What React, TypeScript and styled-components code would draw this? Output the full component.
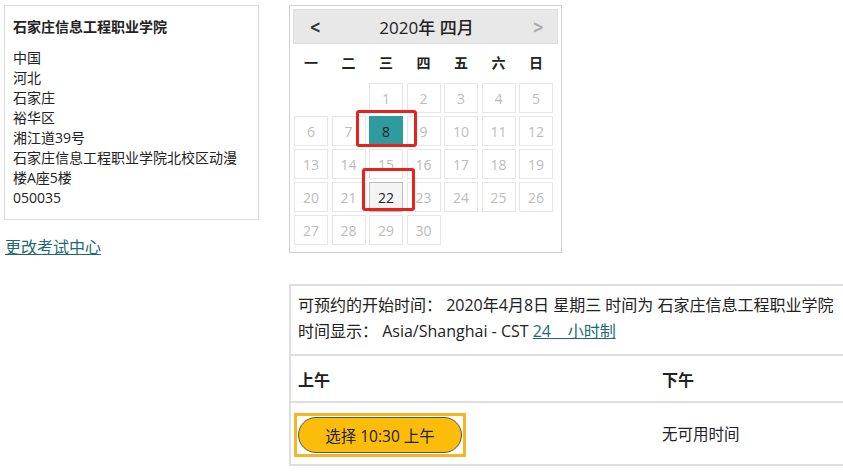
import React from 'react';
import styled, {createGlobalStyle} from 'styled-components';

const GlobalStyle = createGlobalStyle`
    body {
        margin: 0;
        width: 843px;
        height: 474px;
        overflow: hidden;
        background: #fff;
        color: #222;
        font-family: "Open Sans", "Noto Sans CJK SC", sans-serif;
    }
`;

const WEEKDAYS = ['一', '二', '三', '四', '五', '六', '日'];
const ADDRESS = ['中国', '河北', '石家庄', '裕华区', '湘江道39号', '石家庄信息工程职业学院北校区动漫', '楼A座5楼', '050035'];
const SELECTED_DAY = 8;
const FOCUSED_DAY = 22;

const Page = styled.div`
    display: flex;
    align-items: flex-start;
    gap: 30px;
    padding: 5px 0 0 4px;
`;

const LeftCol = styled.div`
    width: 255px;
    flex-shrink: 0;
`;

const AddressCard = styled.div`
    border: 1px solid #dcdcdc;
    padding: 11px 8px 11px 8px;
    font-size: 14px;
    line-height: 20px;
`;

const CardTitle = styled.div`
    font-weight: 700;
    margin-bottom: 11px;
`;

const ChangeLink = styled.a`
    display: inline-block;
    margin-top: 17px;
    margin-left: 1px;
    font-size: 16px;
    line-height: 20px;
    color: #1c6b73;
    text-decoration: underline;
    cursor: pointer;
`;

const RightCol = styled.div`
    width: 600px;
    flex-shrink: 0;
`;

const Calendar = styled.div`
    position: relative;
    width: 265px;
    border: 1px solid #cfcfcf;
    padding: 3px 3px 7px 3px;
`;

const CalHeader = styled.div`
    display: flex;
    align-items: center;
    justify-content: space-between;
    height: 35px;
    padding: 0 12px 0 14px;
    background: #e8e8e8;
    border: 1px solid #dedede;
    box-sizing: border-box;
`;

const NavArrow = styled.span<{$disabled?: boolean}>`
    font-size: 17px;
    font-weight: 700;
    color: ${(p) => (p.$disabled ? '#aaa' : '#333')};
    font-family: "DejaVu Sans", sans-serif;
    transform: scaleX(0.8);
`;

const MonthTitle = styled.div`
    font-size: 17px;
    font-weight: 500;
    color: #222;
`;

const DayGrid = styled.div`
    display: grid;
    grid-template-columns: repeat(7, 34px);
    column-gap: 3.5px;
    row-gap: 3px;
    padding-left: 1px;
`;

const WeekdayCell = styled.div`
    height: 35px;
    display: flex;
    align-items: center;
    justify-content: center;
    font-size: 14px;
    font-weight: 700;
    color: #222;
    margin-bottom: 1px;
`;

const DayCell = styled.div<{$state: 'off' | 'selected' | 'focused'}>`
    height: 30px;
    box-sizing: border-box;
    display: flex;
    align-items: center;
    justify-content: center;
    font-size: 14px;
    border: 1px solid ${(p) => (p.$state === 'focused' ? '#bdbdbd' : p.$state === 'selected' ? '#2e9c9f' : '#e6e6e6')};
    background: ${(p) => (p.$state === 'selected' ? '#2e9c9f' : p.$state === 'focused' ? '#f4f4f4' : '#fff')};
    color: ${(p) => (p.$state === 'off' ? '#bcbcbc' : '#222')};
`;

const Marker = styled.div`
    position: absolute;
    border: 3px solid #e8231d;
    border-radius: 3px;
    box-sizing: border-box;
    pointer-events: none;
`;

const Slots = styled.div`
    margin-top: 31px;
    border-top: 2px solid #dedede;
    border-left: 2px solid #dedede;
    border-bottom: 2px solid #dedede;
`;

const Info = styled.div`
    padding: 6px 8px 10px 7px;
    font-size: 16px;
    line-height: 26px;
    color: #222;
    white-space: nowrap;
`;

const InfoLink = styled.a`
    color: #1c6b73;
    text-decoration: underline;
    white-space: pre;
`;

const SlotRow = styled.div<{$head?: boolean}>`
    display: grid;
    grid-template-columns: 368px 1fr;
    align-items: center;
    height: ${(p) => (p.$head ? '45px' : '61px')};
    border-top: 2px solid #dedede;
    padding-left: 3px;
    font-size: ${(p) => (p.$head ? '16px' : '15.5px')};
    font-weight: ${(p) => (p.$head ? 700 : 400)};
`;

const SlotHead = styled.div`
    padding-left: 4px;
`;

const FocusRing = styled.span`
    display: inline-block;
    border: 3px solid #f7b523;
    padding: 1px;
    line-height: 0;
    margin-top: 3px;
`;

const SlotButton = styled.button`
    width: 164px;
    height: 36px;
    border: 1px solid #555;
    border-radius: 18px;
    background: #fcbc0a;
    color: #222;
    font-family: "Open Sans", "Noto Sans CJK SC", sans-serif;
    font-size: 15.5px;
    cursor: pointer;
    outline: none;
`;

const buildDays = () => {
    const cells: (number | null)[] = [null, null];
    for (let d = 1; d <= 30; d++) {
        cells.push(d);
    }
    return cells;
};

const App = () => {
    const days = buildDays();

    return (
        <>
            <GlobalStyle/>
            <Page>
                <LeftCol>
                    <AddressCard>
                        <CardTitle>{'石家庄信息工程职业学院'}</CardTitle>
                        {ADDRESS.map((line) => (
                            <div key={line}>{line}</div>
                        ))}
                    </AddressCard>
                    <ChangeLink>{'更改考试中心'}</ChangeLink>
                </LeftCol>
                <RightCol>
                    <Calendar>
                        <CalHeader>
                            <NavArrow>{'<'}</NavArrow>
                            <MonthTitle>{'2020年 四月'}</MonthTitle>
                            <NavArrow $disabled={true}>{'>'}</NavArrow>
                        </CalHeader>
                        <DayGrid>
                            {WEEKDAYS.map((w) => (
                                <WeekdayCell key={w}>{w}</WeekdayCell>
                            ))}
                            {days.map((d, i) => {
                                if (d === null) {
                                    return <div key={'empty' + i}/>;
                                }
                                let state: 'off' | 'selected' | 'focused' = 'off';
                                if (d === SELECTED_DAY) {
                                    state = 'selected';
                                } else if (d === FOCUSED_DAY) {
                                    state = 'focused';
                                }
                                return (
                                    <DayCell
                                        key={d}
                                        $state={state}
                                    >
                                        {d}
                                    </DayCell>
                                );
                            })}
                        </DayGrid>

                        {/* annotation boxes drawn over the calendar */}
                        <Marker style={{left: 66, top: 104, width: 61, height: 37}}/>
                        <Marker style={{left: 72, top: 162, width: 53, height: 43}}/>
                    </Calendar>

                    <Slots>
                        <Info>
                            <div>{'可预约的开始时间： 2020年4月8日 星期三 时间为 石家庄信息工程职业学院'}</div>
                            <div>
                                {'时间显示： Asia/Shanghai - CST '}
                                <InfoLink>{'24    小时制'}</InfoLink>
                            </div>
                        </Info>
                        <SlotRow $head={true}>
                            <SlotHead>{'上午'}</SlotHead>
                            <div>{'下午'}</div>
                        </SlotRow>
                        <SlotRow>
                            <div>
                                <FocusRing>
                                    <SlotButton>{'选择 10:30 上午'}</SlotButton>
                                </FocusRing>
                            </div>
                            <div>{'无可用时间'}</div>
                        </SlotRow>
                    </Slots>
                </RightCol>
            </Page>
        </>
    );
};

export default App;
